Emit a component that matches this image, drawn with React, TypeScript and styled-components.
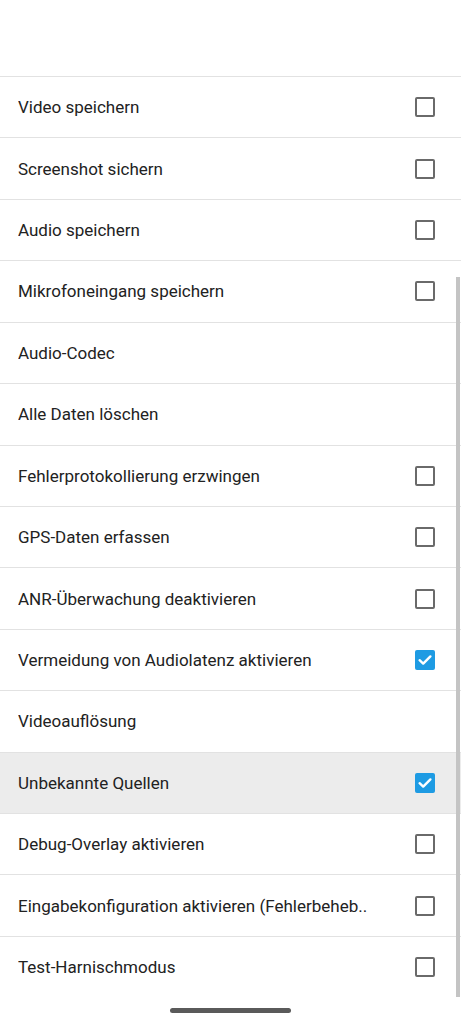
import React from 'react';
import styled, { createGlobalStyle } from 'styled-components';

const GlobalStyle = createGlobalStyle`
  html, body {
    margin: 0;
    padding: 0;
    background: #fff;
  }
  body {
    font-family: Roboto, "Noto Sans", sans-serif;
  }
`;

const Screen = styled.div`
  position: relative;
  width: 461px;
  height: 1024px;
  overflow: hidden;
  background: #fff;
`;

const Header = styled.div`
  height: 76px;
`;

const List = styled.div`
  display: flex;
  flex-direction: column;
`;

const Row = styled.div<{ $active?: boolean }>`
  box-sizing: border-box;
  height: 61.43px;
  display: flex;
  align-items: center;
  padding: 0 26px 0 18px;
  border-top: 1px solid #e2e2e2;
  background: ${(p) => (p.$active ? '#ececec' : '#fff')};
`;

const Label = styled.span`
  flex: 1;
  font-size: 17px;
  color: #222;
  white-space: nowrap;
  overflow: hidden;
`;

const Box = styled.span<{ $checked?: boolean }>`
  box-sizing: border-box;
  width: 20px;
  height: 20px;
  border-radius: 2px;
  border: ${(p) => (p.$checked ? 'none' : '2px solid #6a6a6a')};
  background: ${(p) => (p.$checked ? '#1e9be3' : 'transparent')};
  display: flex;
  align-items: center;
  justify-content: center;
  flex-shrink: 0;
`;

const ScrollThumb = styled.div`
  position: absolute;
  right: 1px;
  top: 277px;
  width: 4px;
  height: 720px;
  background: #c4c4c4;
`;

const HomeBar = styled.div`
  position: absolute;
  left: 170px;
  top: 1008px;
  width: 121px;
  height: 5px;
  border-radius: 3px;
  background: #5a5a5a;
`;

interface Item {
  label: string;
  box?: boolean;
  checked?: boolean;
  active?: boolean;
}

const items: Item[] = [
  { label: 'Video speichern', box: true },
  { label: 'Screenshot sichern', box: true },
  { label: 'Audio speichern', box: true },
  { label: 'Mikrofoneingang speichern', box: true },
  { label: 'Audio-Codec' },
  { label: 'Alle Daten löschen' },
  { label: 'Fehlerprotokollierung erzwingen', box: true },
  { label: 'GPS-Daten erfassen', box: true },
  { label: 'ANR-Überwachung deaktivieren', box: true },
  { label: 'Vermeidung von Audiolatenz aktivieren', box: true, checked: true },
  { label: 'Videoauflösung' },
  { label: 'Unbekannte Quellen', box: true, checked: true, active: true },
  { label: 'Debug-Overlay aktivieren', box: true },
  { label: 'Eingabekonfiguration aktivieren (Fehlerbeheb..', box: true },
  { label: 'Test-Harnischmodus', box: true },
];

const Check = () => (
  <svg width="16" height="16" viewBox="0 0 16 16">
    <path d="M2.6 8.2 L6.2 11.6 L13.4 4.4" fill="none" stroke="#fff" strokeWidth="2.4" strokeLinecap="round" strokeLinejoin="round" />
  </svg>
);

const App: React.FC = function() {
  return (
    <Screen>
      <GlobalStyle />
      <Header />
      <List>
        {items.map((item) => (
          <Row key={item.label} $active={item.active}>
            <Label>{item.label}</Label>
            {item.box && <Box $checked={item.checked}>{item.checked && <Check />}</Box>}
          </Row>
        ))}
      </List>
      <ScrollThumb />
      <HomeBar />
    </Screen>
  );
};

export default App;
